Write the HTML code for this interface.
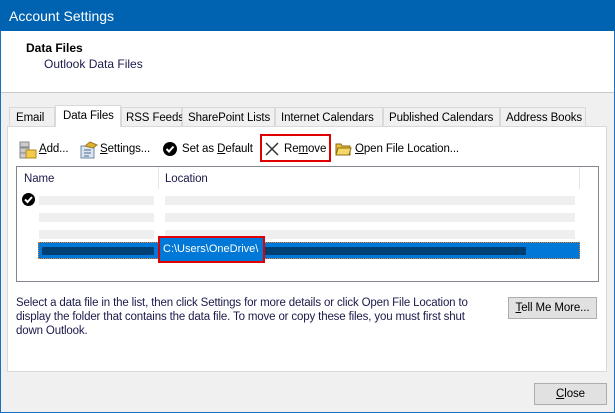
<!DOCTYPE html>
<html><head><style>
*{margin:0;padding:0;box-sizing:border-box}
body{width:615px;height:413px;position:relative;background:#f0f0f0;font-family:"Liberation Sans",sans-serif;font-size:12px;color:#000;overflow:hidden}
.a{position:absolute;white-space:nowrap}
.t{font-size:11.5px;letter-spacing:-0.1px}
u{text-decoration:underline}
</style></head><body>
<div class="a" style="left:0;top:0;width:615px;height:413px;border:1px solid #1a6fbf;border-top:none"></div>
<div class="a" style="left:0;top:0;width:615px;height:31px;background:#0063b1;color:#fff;font-size:14px;padding:8px 0 0 9px">Account Settings</div>
<div class="a" style="left:1px;top:31px;width:613px;height:62px;background:#fff;border-bottom:1px solid #c8c8c8"></div>
<div class="a" style="left:26px;top:41px;font-weight:bold">Data Files</div>
<div class="a" style="left:44px;top:57px;color:#1a1a4a">Outlook Data Files</div>
<!-- tabs -->
<div class="a" style="left:7px;top:126px;width:600px;height:246px;background:#fff;border:1px solid #d9d9d9"></div>
<div class="a t" style="left:9px;top:107px;width:46px;height:20px;background:#f0f0f0;border:1px solid #d9d9d9;padding:4px 0 0 6px">Email</div>
<div class="a t" style="left:55px;top:105px;width:66px;height:22px;background:#fff;border:1px solid #d9d9d9;border-bottom:none;padding:4px 0 0 7px">Data Files</div>
<div class="a t" style="left:121px;top:107px;width:61px;height:20px;background:#f0f0f0;border:1px solid #d9d9d9;padding:4px 0 0 4px">RSS Feeds</div>
<div class="a t" style="left:182px;top:107px;width:93px;height:20px;background:#f0f0f0;border:1px solid #d9d9d9;padding:4px 0 0 5px">SharePoint Lists</div>
<div class="a t" style="left:275px;top:107px;width:108px;height:20px;background:#f0f0f0;border:1px solid #d9d9d9;padding:4px 0 0 5px">Internet Calendars</div>
<div class="a t" style="left:383px;top:107px;width:117px;height:20px;background:#f0f0f0;border:1px solid #d9d9d9;padding:4px 0 0 5px">Published Calendars</div>
<div class="a t" style="left:500px;top:107px;width:86px;height:20px;background:#f0f0f0;border:1px solid #d9d9d9;padding:4px 0 0 5px">Address Books</div>
<!-- toolbar -->
<svg class="a" style="left:19px;top:141px" width="18" height="18"><rect x="1" y="1" width="9" height="5" fill="#ccc" stroke="#888"/><rect x="1" y="7" width="9" height="5" fill="#ccc" stroke="#888"/><rect x="1" y="12" width="9" height="5" fill="#ccc" stroke="#888"/><rect x="7" y="9" width="10" height="8" fill="#f2c94c" stroke="#b08a20"/></svg>
<div class="a t" style="left:39px;top:143px"><u>A</u>dd...</div>
<svg class="a" style="left:80px;top:141px" width="18" height="18"><rect x="1" y="5" width="13" height="12" fill="#dde6f0" stroke="#6b87a8"/><path d="M4 9h7M4 12h7M4 15h5" stroke="#4a6a90"/><path d="M5 5l5-4 7 3-4 3z" fill="#e0b030" stroke="#9a7a20"/></svg>
<div class="a t" style="left:100px;top:143px"><u>S</u>ettings...</div>
<svg class="a" style="left:162px;top:141px" width="16" height="16"><circle cx="8" cy="8" r="7" fill="#000"/><path d="M4.5 8l2.5 2.5 4.5-5" stroke="#fff" stroke-width="2" fill="none"/></svg>
<div class="a t" style="left:182px;top:143px">Set as <u>D</u>efault</div>
<div class="a" style="left:260px;top:134px;width:71px;height:28px;border:2px solid #e00000"></div>
<svg class="a" style="left:265px;top:142px" width="14" height="14"><path d="M1 1l12 12M13 1L1 13" stroke="#333" stroke-width="1.5"/></svg>
<div class="a t" style="left:284px;top:143px">Re<u>m</u>ove</div>
<svg class="a" style="left:335px;top:142px" width="17" height="14"><path d="M1 2h5l1 2h8v9H1z" fill="#e8c040" stroke="#8a6a10"/><path d="M1 13l2-7h13l-2 7z" fill="#f6d868" stroke="#8a6a10"/></svg>
<div class="a t" style="left:355px;top:143px"><u>O</u>pen File Location...</div>
<!-- list -->
<div class="a" style="left:16px;top:166px;width:583px;height:116px;border:1px solid #828790;background:#fff"></div>
<div class="a" style="left:158px;top:167px;width:1px;height:22px;background:#e5e5e5"></div>
<div class="a" style="left:579px;top:167px;width:1px;height:22px;background:#e5e5e5"></div>
<div class="a t" style="left:24px;top:173px;color:#1a1a4a">Name</div>
<div class="a t" style="left:165px;top:173px;color:#1a1a4a">Location</div>
<svg class="a" style="left:21px;top:192px" width="15" height="15"><circle cx="7.5" cy="7.5" r="6.5" fill="#000"/><path d="M4 7.5l2.5 2.5 4.5-5" stroke="#fff" stroke-width="2" fill="none"/></svg>
<div class="a" style="left:39px;top:196px;width:115px;height:9px;background:#efefef"></div>
<div class="a" style="left:165px;top:196px;width:410px;height:9px;background:#efefef"></div>
<div class="a" style="left:39px;top:213px;width:115px;height:9px;background:#efefef"></div>
<div class="a" style="left:165px;top:213px;width:410px;height:9px;background:#efefef"></div>
<div class="a" style="left:39px;top:230px;width:115px;height:9px;background:#efefef"></div>
<div class="a" style="left:165px;top:230px;width:410px;height:9px;background:#efefef"></div>
<div class="a" style="left:38px;top:242px;width:542px;height:17px;background:#0078d7;border:1px dotted #e08030"></div>
<div class="a" style="left:42px;top:247px;width:112px;height:8px;background:#003f73"></div>
<div class="a" style="left:165px;top:247px;width:361px;height:8px;background:#003f73"></div>
<div class="a" style="left:158px;top:236px;width:107px;height:27px;border:2px solid #e00000;background:#0078d7"></div>
<div class="a" style="left:163px;top:243px;color:#fff;font-size:11px">C:\Users\OneDrive\</div>
<!-- description -->
<div class="a" style="left:16px;top:296px;width:474px;line-height:14px;color:#1a1a4a;font-size:11.5px;letter-spacing:-0.15px;white-space:normal">Select a data file in the list, then click Settings for more details or click Open File Location to display the folder that contains the data file. To move or copy these files, you must first shut down Outlook.</div>
<div class="a t" style="left:508px;top:297px;width:89px;height:22px;background:#e1e1e1;border:1px solid #adadad;text-align:center;padding-top:4px"><u>T</u>ell Me More...</div>
<div class="a t" style="left:534px;top:383px;width:73px;height:22px;background:#e1e1e1;border:1px solid #adadad;text-align:center;padding-top:4px"><u>C</u>lose</div>
</body></html>
